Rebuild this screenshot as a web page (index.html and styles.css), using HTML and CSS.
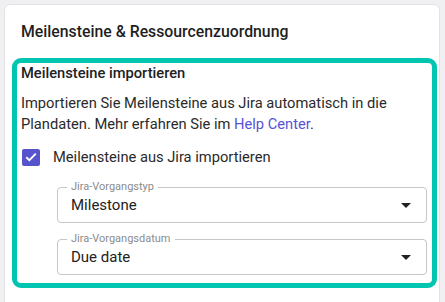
FILE: index.html
```html
<!DOCTYPE html>
<html>
<head>
<meta name="viewport" content="width=device-width, initial-scale=1">
<link rel="stylesheet" href="styles.css">
</head>
<body>
  <!-- Settings card -->
  <div class="card">
    <h3 class="card-title">Meilensteine &amp; Ressourcenzuordnung</h3>

    <!-- Highlighted import section -->
    <div class="import-box">
      <h4 class="import-title">Meilensteine importieren</h4>
      <p class="import-text">
        Importieren Sie Meilensteine aus Jira automatisch in die Plandaten. Mehr erfahren Sie im <a href="#">Help Center</a>.
      </p>

      <label class="check-row">
        <span class="checkbox">
          <svg width="12" height="10" viewBox="0 0 12 10"><path d="M1.2 5.2 L4.4 8.2 L10.8 1.6" fill="none" stroke="#fff" stroke-width="1.9"/></svg>
        </span>
        <span>Meilensteine aus Jira importieren</span>
      </label>

      <div class="fields">
        <div class="select">
          <span class="select-label">Jira-Vorgangstyp</span>
          <span class="select-value">Milestone</span>
          <span class="arrow"></span>
        </div>
        <div class="select">
          <span class="select-label">Jira-Vorgangsdatum</span>
          <span class="select-value">Due date</span>
          <span class="arrow"></span>
        </div>
      </div>
    </div>
  </div>
</body>
</html>
```

FILE: styles.css
```css
/* Page background */
body {
  margin: 0;
  font-family: Roboto, "Liberation Sans", sans-serif;
  background-color: #f0f0f2;
  color: #222;
}

/* White card with a light border, runs past the bottom of the window */
.card {
  margin: 4px 5px 0 4px;
  height: 320px;
  padding: 17px 0 0 0;
  background-color: #fff;
  border: 1px solid #e3e3e6;
  border-radius: 6px;
  box-sizing: border-box;
}

.card-title {
  margin: 0 0 16px 16px;
  font-size: 15.8px;
  font-weight: 500;
  line-height: 20px;
  color: #1f1f1f;
}

/* Teal outline round the import settings */
.import-box {
  margin: 0 2px 0 7px;
  padding: 0 5px 8px 4px;
  border: 5px solid #00c5b0;
  border-radius: 9px;
}

.import-title {
  margin: 0;
  font-size: 14.7px;
  font-weight: 500;
  line-height: 20px;
  color: #222;
}

.import-text {
  margin: 10px 0 0 0;
  font-size: 14.7px;
  line-height: 21px;
  color: #2a2a2a;
}

.import-text a {
  color: #5753d6;
  text-decoration: none;
}

/* Checkbox row */
.check-row {
  display: flex;
  align-items: center;
  gap: 13px;
  margin: 12px 0 0 1px;
  font-size: 14.7px;
  line-height: 20px;
  color: #2a2a2a;
}

.checkbox {
  display: flex;
  align-items: center;
  justify-content: center;
  width: 18px;
  height: 17px;
  border-radius: 2px;
  background-color: #5753cc;
}

/* Outlined selects */
.fields {
  display: flex;
  flex-direction: column;
  gap: 16px;
  margin: 20px 0 0 36px;
}

.select {
  position: relative;
  display: flex;
  align-items: center;
  justify-content: space-between;
  height: 34px;
  padding: 0 15px 0 13px;
  border: 1px solid #c6c6c6;
  border-radius: 4px;
}

.select-label {
  position: absolute;
  top: -8px;
  left: 9px;
  padding: 0 4px;
  background-color: #fff;
  font-size: 11px;
  line-height: 14px;
  color: #8c8c8c;
}

.select-value {
  font-size: 15px;
  color: #222;
}

.arrow {
  width: 0;
  height: 0;
  border-left: 5px solid transparent;
  border-right: 5px solid transparent;
  border-top: 5px solid #222;
}
```
